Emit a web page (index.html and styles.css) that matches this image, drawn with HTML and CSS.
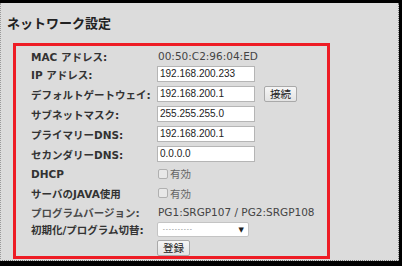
FILE: index.html
```html
<!DOCTYPE html>
<html lang="ja">
<head>
  <meta charset="UTF-8" />
  <title>ネットワーク設定</title>
  <link rel="stylesheet" href="styles.css">
</head>
<body>
  <div class="panel">
    <h2 class="title">ネットワーク設定</h2>

    <div class="settings-box">
      <div class="row row-text">
        <span class="label">MAC アドレス:</span>
        <span class="value">00:50:C2:96:04:ED</span>
      </div>
      <div class="row">
        <span class="label">IP アドレス:</span>
        <span class="input">192.168.200.233</span>
      </div>
      <div class="row">
        <span class="label">デフォルトゲートウェイ:</span>
        <span class="input">192.168.200.1</span>
        <span class="btn btn-connect">接続</span>
      </div>
      <div class="row">
        <span class="label">サブネットマスク:</span>
        <span class="input">255.255.255.0</span>
      </div>
      <div class="row">
        <span class="label">プライマリーDNS:</span>
        <span class="input">192.168.200.1</span>
      </div>
      <div class="row">
        <span class="label">セカンダリーDNS:</span>
        <span class="input">0.0.0.0</span>
      </div>
      <div class="row">
        <span class="label">DHCP</span>
        <span class="check"><span class="box"></span>有効</span>
      </div>
      <div class="row">
        <span class="label">サーバのJAVA使用</span>
        <span class="check"><span class="box"></span>有効</span>
      </div>
      <div class="row row-text row-version">
        <span class="label label-light">プログラムバージョン:</span>
        <span class="value">PG1:SRGP107 / PG2:SRGP108</span>
      </div>
      <div class="row row-select">
        <span class="label">初期化/プログラム切替:</span>
        <span class="select"><span class="select-text">----------</span><span class="arrow">▼</span></span>
      </div>
      <div class="row row-submit">
        <span class="label"></span>
        <span class="btn">登録</span>
      </div>
    </div>
  </div>
</body>
</html>
```

FILE: styles.css
```css
body {
  margin: 0;
  width: 402px;
  height: 266px;
  background: #000;
  overflow: hidden;
  font-family: "DejaVu Sans", "Noto Sans CJK JP", sans-serif;
  color: #333;
}

.panel {
  box-sizing: border-box;
  height: 258px;
  margin: 3px 3px 5px 0;
  padding: 11px 0 0 6px;
  background: #dcdcdc;
  border-left: 1px dotted #9a9a9a;
  border-right: 1px dotted #777;
  border-bottom: 1px dotted #777;
}

.title {
  margin: 0 0 11px 0;
  height: 18px;
  line-height: 18px;
  font-size: 13px;
  font-weight: bold;
  font-family: "Noto Sans CJK JP", sans-serif;
  color: #222;
}

.settings-box {
  box-sizing: border-box;
  width: 317px;
  height: 216px;
  margin-left: 6px;
  border: 3px solid #ee1c25;
  padding: 4px 0 0 15px;
  display: flex;
  flex-direction: column;
  gap: 4px;
}

.row {
  display: flex;
  align-items: center;
  height: 16px;
}

.row-text {
  height: 12px;
}

.row-version {
  margin-top: 1px;
}

.row-select {
  height: 15px;
}

.row-submit {
  margin-top: -1px;
}

.label {
  width: 126px;
  flex-shrink: 0;
  font-size: 10.5px;
  font-weight: bold;
  color: #333;
  white-space: nowrap;
}

.label-light {
  color: #4a4a4a;
}

.value {
  padding-left: 1px;
  font-size: 10.5px;
  color: #444;
  white-space: nowrap;
}

.input {
  box-sizing: border-box;
  width: 98px;
  height: 16px;
  line-height: 14px;
  padding-left: 2px;
  background: #fff;
  border: 1px solid #b5b5b5;
  font-family: "Liberation Sans", sans-serif;
  font-size: 10px;
  color: #222;
}

.btn {
  box-sizing: border-box;
  height: 16px;
  line-height: 14px;
  padding: 0 5px;
  background: linear-gradient(#f6f6f6, #e3e3e3);
  border: 1px solid #a9a9a9;
  border-radius: 2px;
  font-family: "Noto Sans CJK JP", sans-serif;
  font-size: 10.5px;
  color: #222;
}

.btn-connect {
  margin-left: 9px;
}

.check {
  display: flex;
  align-items: center;
  gap: 2px;
  padding-left: 1px;
  font-family: "Noto Sans CJK JP", sans-serif;
  font-size: 10.5px;
  color: #666;
}

.box {
  box-sizing: border-box;
  width: 10px;
  height: 10px;
  background: #e8e8e8;
  border: 1px solid #b0b0b0;
  border-radius: 2px;
}

.select {
  box-sizing: border-box;
  width: 92px;
  height: 15px;
  display: flex;
  align-items: center;
  justify-content: space-between;
  padding: 0 4px 0 4px;
  background: #fff;
  border: 1px solid #c4c4c4;
  border-radius: 2px;
  font-family: "Liberation Mono", monospace;
  color: #666;
}

.select-text {
  font-size: 6px;
  letter-spacing: -0.6px;
}

.arrow {
  font-family: "DejaVu Sans", sans-serif;
  font-size: 7px;
  color: #222;
}
```
